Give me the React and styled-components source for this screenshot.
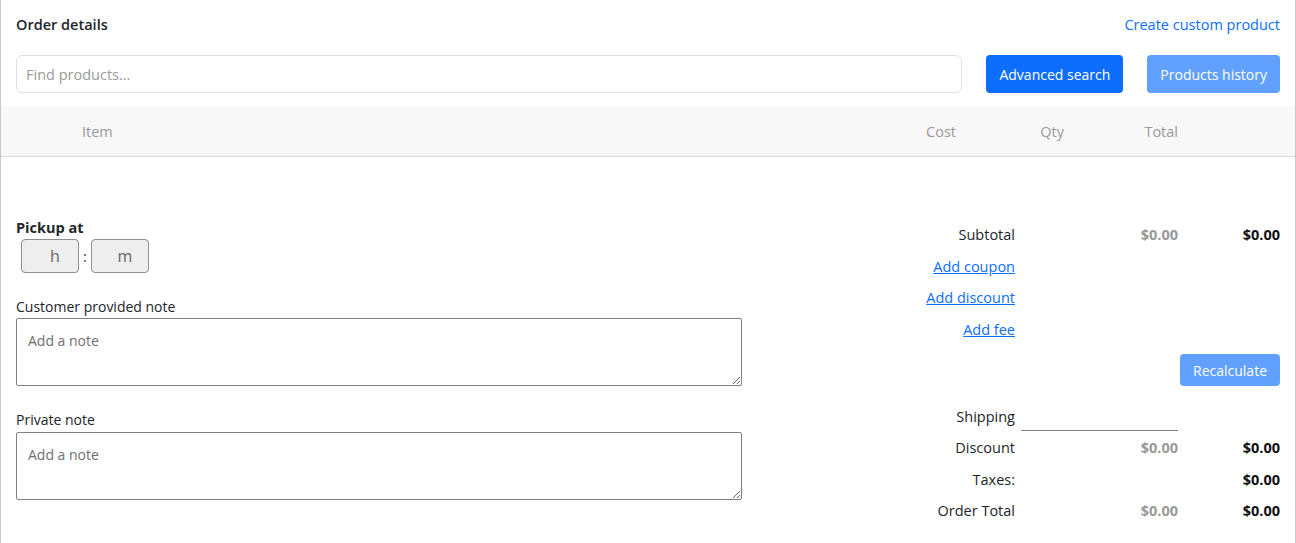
import React from 'react'
import styled, {createGlobalStyle} from 'styled-components'

const GlobalStyle = createGlobalStyle`
  body {
    margin: 0;
    background: #fff;
    font-family: "Open Sans", "Liberation Sans", sans-serif;
    font-size: 14px;
    color: #212529;
  }
  * { box-sizing: border-box; }
`

const Panel = styled.div`
  width: 1296px;
  height: 543px;
  border-left: 1px solid #c8c8c8;
  border-right: 1px solid #c8c8c8;
  overflow: hidden;
`

const Header = styled.div`
  display: flex;
  justify-content: space-between;
  align-items: center;
  padding: 13px 15px 0 15px;
  height: 36px;
`

const Title = styled.h2`
  margin: 0;
  font-size: 14.5px;
  font-weight: 600;
`

const TextLink = styled.a`
  color: #0d6efd;
  text-decoration: none;
  font-size: 14.5px;
  cursor: pointer;
`

const SearchRow = styled.div`
  display: flex;
  align-items: center;
  gap: 24px;
  padding: 19px 15px 0 15px;
`

const SearchInput = styled.input`
  flex: 1;
  height: 38px;
  border: 1px solid #dee2e6;
  border-radius: 6px;
  padding: 0 9px;
  font: inherit;
  font-size: 14.5px;
  &::placeholder { color: #9a9a9a; }
`

const Button = styled.button`
  height: ${p => p.$height || '38px'};
  padding: 0 ${p => p.$pad || '13px'};
  border: none;
  border-radius: 4px;
  background: #0d6efd;
  color: #fff;
  font: inherit;
  font-size: 14px;
  opacity: ${p => (p.$muted ? 0.65 : 1)};
  cursor: pointer;
`

const TableHead = styled.div`
  display: grid;
  grid-template-columns: 81px 1fr 100px 108px 114px 117px;
  align-items: center;
  margin-top: 13px;
  height: 51px;
  background: #f8f8f8;
  border-bottom: 1px solid #dcdcdc;
  color: #999;
  font-size: 14.5px;
`

const HeadCell = styled.div`
  text-align: ${p => p.$align || 'left'};
`

const Body = styled.div`
  display: flex;
  justify-content: space-between;
  padding: 62px 15px 0 15px;
`

const LeftCol = styled.div`
  width: 726px;
  display: flex;
  flex-direction: column;
`

const PickupLabel = styled.div`
  font-weight: 700;
  font-size: 14.5px;
  line-height: 17px;
`

const TimeRow = styled.div`
  display: flex;
  align-items: center;
  gap: 4px;
  margin: 3px 0 0 5px;
`

const TimeInput = styled.input`
  width: 58px;
  height: 34px;
  border: 1px solid #8f8f8f;
  border-radius: 4px;
  background: #eee;
  font: inherit;
  font-size: 16px;
  text-align: center;
  padding-left: 12px;
  &::placeholder { color: #666; }
`

const Colon = styled.span`
  font-size: 15px;
  color: #444;
`

const FieldLabel = styled.label`
  display: block;
  margin-top: ${p => p.$top || '24px'};
  font-size: 14px;
  line-height: 20px;
`

const NoteArea = styled.textarea`
  display: block;
  width: 726px;
  height: 68px;
  margin-top: ${p => p.$top || '1px'};
  border: 1px solid #808080;
  border-radius: 2px;
  padding: 12px 11px;
  font: inherit;
  font-size: 14px;
  &::placeholder { color: #6f6f6f; }
`

const Totals = styled.div`
  width: 358px;
  display: grid;
  grid-template-columns: 1fr 163px 102px;
  grid-template-rows: repeat(4, 31.6px) 55px repeat(4, 31.6px);
  align-items: center;
  font-size: 14.5px;
`

const Label = styled.div`
  text-align: right;
`

const Value = styled.div`
  text-align: right;
  font-weight: 700;
  color: ${p => (p.$muted ? '#999' : '#111')};
`

const UnderLink = styled.a`
  grid-column: 1;
  text-align: right;
  color: #0d6efd;
  text-decoration: underline;
  cursor: pointer;
`

const RecalcCell = styled.div`
  grid-column: 1 / 4;
  align-self: start;
  display: flex;
  justify-content: flex-end;
  padding-top: 9px;
`

const ShippingCell = styled.div`
  grid-column: 2 / 4;
`

const ShippingInput = styled.input`
  display: block;
  margin-left: 6px;
  width: 157px;
  height: 30px;
  border: none;
  border-bottom: 1px solid #808080;
  outline: none;
  font: inherit;
`

const rows = [
  {label: 'Discount', muted: '$0.00', total: '$0.00'},
  {label: 'Taxes:', muted: '', total: '$0.00'},
  {label: 'Order Total', muted: '$0.00', total: '$0.00'},
]

export default function App() {
  return (
    <Panel>
      <GlobalStyle/>
      <Header>
        <Title>Order details</Title>
        <TextLink>Create custom product</TextLink>
      </Header>

      <SearchRow>
        <SearchInput placeholder="Find products..."/>
        <Button>Advanced search</Button>
        <Button $muted>Products history</Button>
      </SearchRow>

      <TableHead>
        <div/>
        <HeadCell>Item</HeadCell>
        <HeadCell $align="right">Cost</HeadCell>
        <HeadCell $align="right">Qty</HeadCell>
        <HeadCell $align="right">Total</HeadCell>
        <div/>
      </TableHead>

      <Body>
        <LeftCol>
          <PickupLabel>Pickup at</PickupLabel>
          <TimeRow>
            <TimeInput placeholder="h"/>
            <Colon>:</Colon>
            <TimeInput placeholder="m"/>
          </TimeRow>
          <FieldLabel>Customer provided note</FieldLabel>
          <NoteArea placeholder="Add a note"/>
          <FieldLabel>Private note</FieldLabel>
          <NoteArea $top="2px" placeholder="Add a note"/>
        </LeftCol>

        <Totals>
          <Label>Subtotal</Label>
          <Value $muted>$0.00</Value>
          <Value>$0.00</Value>
          <UnderLink>Add coupon</UnderLink>
          <UnderLink>Add discount</UnderLink>
          <UnderLink>Add fee</UnderLink>
          <RecalcCell>
            <Button $muted $height="32px" $pad="13px">Recalculate</Button>
          </RecalcCell>
          <Label>Shipping</Label>
          <ShippingCell><ShippingInput/></ShippingCell>
          {rows.map(r => (
            <React.Fragment key={r.label}>
              <Label>{r.label}</Label>
              <Value $muted>{r.muted}</Value>
              <Value>{r.total}</Value>
            </React.Fragment>
          ))}
        </Totals>
      </Body>
    </Panel>
  )
}
